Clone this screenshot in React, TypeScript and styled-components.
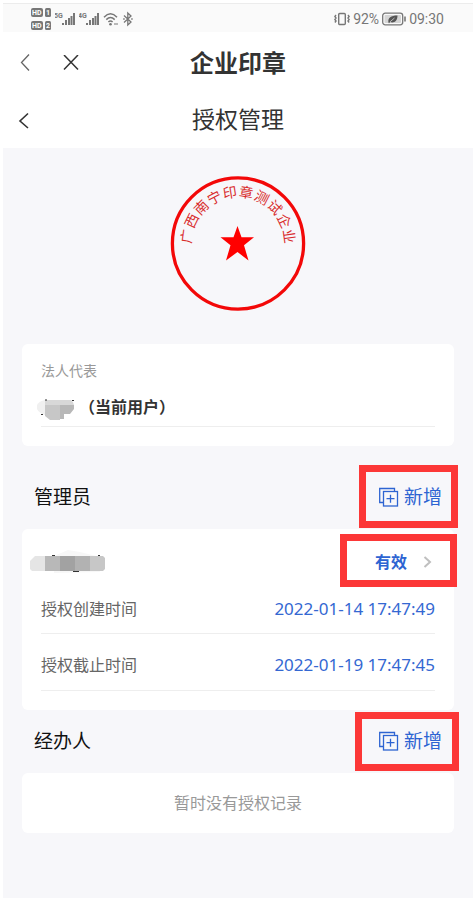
import React from "react";
import styled, { createGlobalStyle } from "styled-components";

const GlobalStyle = createGlobalStyle`
  * { box-sizing: border-box; }
  html, body { margin: 0; padding: 0; background: #ffffff; }
  body { font-family: Inter, "Noto Sans CJK SC", sans-serif; color: #333333; }
  button { font: inherit; color: inherit; background: none; border: 0; padding: 0; cursor: pointer; }
  h1, h2, p, dl, dt, dd { margin: 0; font-weight: 400; }
  svg { display: block; flex: none; }
`;

const Page = styled.div`
  min-height: 100vh;
  padding: 3px 0 0 3px;
  display: flex;
  flex-direction: column;
`;

const StatusBar = styled.div`
  height: 29px;
  padding: 2px 29px 0 28px;
  display: flex;
  align-items: center;
  justify-content: space-between;
  background: #fafafa;
  border-top: 1px solid #ececec;
  font-family: Roboto, sans-serif;
  font-size: 14px;
  line-height: 20px;
  color: #777777;
`;

const StatusGroup = styled.div<{ $gap: number }>`
  display: flex;
  align-items: center;
  gap: ${(p) => p.$gap}px;
`;

const Header = styled.header`
  padding-top: 4px;
`;

const HeaderRow = styled.div`
  height: 56px;
  padding: 0 12px;
  display: grid;
  grid-template-columns: 1fr auto 1fr;
  align-items: center;
`;

const HeaderActions = styled.div`
  display: flex;
  align-items: center;
  gap: 26px;
`;

const IconButton = styled.button`
  width: 20px;
  height: 24px;
  display: flex;
  align-items: center;
  justify-content: center;
`;

const AppTitle = styled.h1`
  font-size: 24px;
  line-height: 32px;
  font-weight: 700;
`;

const PageTitle = styled.h2`
  font-size: 23px;
  line-height: 32px;
`;

const Content = styled.main`
  flex: 1;
  padding: 28px 19px;
  background: #f7f7fa;
`;

const SealFrame = styled.div`
  display: flex;
  justify-content: center;
  margin-bottom: 33px;
`;

const Card = styled.section`
  background: #ffffff;
  border-radius: 6px;
`;

const RepresentativeCard = styled(Card)`
  padding: 16px 19px 19px;
  margin-bottom: 20px;
`;

const Caption = styled.p`
  font-size: 14px;
  line-height: 22px;
  color: #999999;
`;

const PersonRow = styled.div`
  height: 45px;
  padding-top: 6px;
  display: flex;
  align-items: center;
  border-bottom: 1px solid #eeeeee;
  font-size: 16px;
  line-height: 24px;
  font-weight: 700;
`;

const NameSlot = styled.div`
  width: 38px;
  padding-top: 6px;
  display: flex;
  margin-left: -4px;
  margin-right: 4px;
`;

const SectionHeader = styled.div`
  height: 63px;
  padding: 0 12px;
  display: flex;
  align-items: center;
  justify-content: space-between;
`;

const SectionTitle = styled.h2`
  font-size: 19px;
  line-height: 28px;
  color: #111111;
`;

const MarkedButton = styled.button<{ $inset: string }>`
  position: relative;
  display: flex;
  align-items: center;
  color: #2d64d2;

  &::after {
    content: "";
    position: absolute;
    inset: ${(p) => p.$inset};
    border: 7px solid #fc3737;
    pointer-events: none;
  }
`;

const AddButton = styled(MarkedButton)`
  gap: 5px;
  font-size: 19px;
  line-height: 28px;
`;

const StatusButton = styled(MarkedButton)`
  gap: 16px;
  margin-right: 3px;
  font-size: 16px;
  line-height: 24px;
  font-weight: 700;
`;

const AdminCard = styled(Card)`
  padding: 8px 19px 19px;
`;

const AdminRow = styled.div`
  height: 50px;
  display: flex;
  align-items: center;
  justify-content: space-between;
`;

const AdminName = styled.div`
  margin-left: -11px;
`;

const Detail = styled.div`
  height: 57px;
  padding-top: 6px;
  display: flex;
  align-items: center;
  justify-content: space-between;
  border-bottom: 1px solid #eeeeee;
  font-size: 16px;
  line-height: 24px;

  &:first-child {
    height: 47px;
    padding: 0 0 3px;
  }
`;

const DetailLabel = styled.dt`
  color: #666666;
`;

const DetailValue = styled.dd`
  font-family: "Noto Sans", sans-serif;
  font-size: 17px;
  color: #3468d2;
`;

const EmptyCard = styled(Card)`
  padding: 18px 19px;
  text-align: center;
  font-size: 16px;
  line-height: 24px;
  color: #999999;
`;

function HdBadges() {
  return (
    <svg width="20" height="24" viewBox="0 0 20 24" fill="#777">
      {["1", "2"].map((n, i) => (
        <g key={n} transform={`translate(0 ${i * 13})`}>
          <rect x="0" y="1" width="12" height="9" rx="2" />
          <rect x="14" y="1" width="6" height="9" rx="1.500" />
          <text x="1" y="8" fill="#fff" fontSize="7" fontWeight="700" fontFamily="Roboto, sans-serif">HD</text>
          <text x="15" y="8" fill="#fff" fontSize="7" fontWeight="700" fontFamily="Roboto, sans-serif">{n}</text>
        </g>
      ))}
    </svg>
  );
}

function Signal({ label }: { label: string }) {
  return (
    <svg width="20" height="16" viewBox="0 0 20 16" fill="#777">
      <text x="-1" y="7" fontSize="7" fontWeight="700" fontFamily="Roboto, sans-serif">{label}</text>
      <rect x="7" y="12" width="2" height="2" />
      <rect x="10" y="9" width="2" height="5" />
      <rect x="13" y="7" width="2" height="7" />
      <rect x="15.500" y="5" width="2" height="9" />
      <rect x="18" y="2" width="2" height="12" />
    </svg>
  );
}

function Wifi() {
  return (
    <svg width="16" height="16" viewBox="0 0 16 16" fill="none" stroke="#777" strokeWidth="1.500">
      <path d="M1 6.200Q7.500 -.6 14 6.200M3.300 8.600Q7.500 4.500 11.700 8.600M5.400 11Q7.500 9 9.600 11" />
      <circle cx="7.500" cy="13.200" r="1.300" fill="#777" stroke="none" />
      <path d="M12 12v2M14 12v2" strokeWidth="1" />
    </svg>
  );
}

function Bluetooth() {
  return (
    <svg width="10" height="16" viewBox="0 0 10 16" fill="none" stroke="#777" strokeWidth="1.300">
      <path d="M1 4.500 8 11 4.800 14V2L8 5 1 11.500" />
      <path d="M.2 8h1.500M8.200 8h1.500" />
    </svg>
  );
}

function Vibrate() {
  return (
    <svg width="16" height="14" viewBox="0 0 16 14" fill="none" stroke="#777" strokeWidth="1.400">
      <rect x="4.700" y="1.500" width="6.600" height="11" rx="1" />
      <path d="M2 3 .9 4.500 2 6 .9 7.500 2 9 .9 10.500M14 3l1.100 1.500L14 6l1.100 1.500L14 9l1.100 1.500" />
    </svg>
  );
}

function Battery() {
  return (
    <svg width="24" height="14" viewBox="0 0 24 14" fill="none">
      <rect x=".7" y="1.200" width="20" height="11.600" rx="2.500" stroke="#777" strokeWidth="1.300" />
      <rect x="2.500" y="3" width="16.500" height="8" rx="1" fill="#d5d5d5" />
      <path d="M6.500 10.500C5.500 6 9 3.500 15.500 3.500 15.500 9 12 11.500 8 10L7 11.500Z" fill="#555" />
      <path d="M8 9.800 12.500 6" stroke="#d5d5d5" strokeWidth=".8" />
      <path d="M23 4.500v5" stroke="#777" strokeWidth="1.600" />
    </svg>
  );
}

function BackIcon({ strong = false }: { strong?: boolean }) {
  return (
    <svg width="20" height="20" viewBox="0 0 20 20" fill="none" stroke={strong ? "#333" : "#666"} strokeWidth={strong ? 1.6 : 1.3}>
      <path d={strong ? "M13 3.500 5 11 13 18" : "M14 .5 6.500 8.500 14 16.500"} />
    </svg>
  );
}

function CloseIcon() {
  return (
    <svg width="16" height="18" viewBox="0 0 16 18" fill="none" stroke="#333" strokeWidth="1.500">
      <path d="M1 0 15 14.500M15 0 1 14.500" />
    </svg>
  );
}

function AddIcon() {
  return (
    <svg width="20" height="22" viewBox="0 0 20 22" fill="none" stroke="#2d64d2" strokeWidth="1.300">
      <path d="M4.500 15.500H.7V1.500H15.500V4" />
      <rect x="4.500" y="4.500" width="14" height="14.500" />
      <path d="M11.500 7.700v8M7.500 11.700h8" />
    </svg>
  );
}

function ChevronIcon() {
  return (
    <svg width="9" height="12" viewBox="0 0 9 12" fill="none" stroke="#bfbfbf" strokeWidth="2">
      <path d="M1.500 1 7 6 1.500 11" />
    </svg>
  );
}

function MaskedRepresentative() {
  return (
    <svg width="38" height="22" viewBox="0 0 38 22">
      <path d="M0 6Q2 2 8 1V16Q2 14 0 10Z" fill="#f0f0f0" />
      <path d="M8 1H34Q37 3 37 6H8Z" fill="#d8d8d8" />
      <path d="M8 6H23V21H13L8 17Z" fill="#c7c7c7" />
      <path d="M23 6H37V10L33 15H27V20H23Z" fill="#b8b8b8" />
      <path d="M4 15.500h2M8 1h2M35 1.500h2" stroke="#333" strokeWidth="1" />
    </svg>
  );
}

function MaskedAdministrator() {
  return (
    <svg width="76" height="24" viewBox="0 0 76 24">
      <path d="M24 6 38 0 50 2 66 6 70 22 24 23Z" fill="#f7f7f7" />
      <path d="M0 11 5 6H15V21H2L0 19Z" fill="#e5e5e5" />
      <rect x="15" y="6" width="15" height="15" fill="#b8b8b8" />
      <rect x="30" y="6" width="15" height="15" fill="#a2a2a2" />
      <rect x="45" y="6" width="15" height="15" fill="#b2b2b2" />
      <path d="M60 6H73L75 8V19L73 21H60Z" fill="#c7c7c7" />
      <path d="M43 21.500h6M22 5.500h3M68 5.500h2" stroke="#333" strokeWidth="1" />
    </svg>
  );
}

const SEAL_NAME = "广西南宁印章测试企业";

function Seal() {
  const chars = Array.from(SEAL_NAME);
  const step = 164 / (chars.length - 1);
  return (
    <svg width="136" height="135" viewBox="0 0 136 135" role="img" aria-label={SEAL_NAME}>
      <circle cx="68" cy="67.500" r="65.600" fill="none" stroke="#f30808" strokeWidth="3.300" />
      {chars.map((c, i) => (
        <text
          key={i}
          x="68"
          y="21"
          textAnchor="middle"
          fontSize="14"
          fontFamily="'Noto Sans CJK SC', sans-serif"
          fill="#d92c2c"
          transform={`rotate(${-82 + i * step} 68 67.500)`}
        >
          {c}
        </text>
      ))}
      <path d="M67.500 50 71.500 61.300H84L74 69.300 78.500 84.500 67.500 76 56 84.500 60.500 69.300 50.500 61.300H63.500Z" fill="#ff0000" />
    </svg>
  );
}

function SectionHeading({ title, inset }: { title: string; inset: string }) {
  return (
    <SectionHeader>
      <SectionTitle>{title}</SectionTitle>
      <AddButton type="button" $inset={inset}>
        <AddIcon />
        新增
      </AddButton>
    </SectionHeader>
  );
}

const details = [
  { label: "授权创建时间", value: "2022-01-14 17:47:49" },
  { label: "授权截止时间", value: "2022-01-19 17:47:45" },
];

export default function App() {
  return (
    <>
      <GlobalStyle />
      <Page>
        <StatusBar>
          <StatusGroup $gap={4}>
            <HdBadges />
            <Signal label="5G" />
            <Signal label="4G" />
            <Wifi />
            <Bluetooth />
          </StatusGroup>
          <StatusGroup $gap={3}>
            <Vibrate />
            <span>92%</span>
            <Battery />
            <time>09:30</time>
          </StatusGroup>
        </StatusBar>
        <Header>
          <HeaderRow>
            <HeaderActions>
              <IconButton type="button" aria-label="返回"><BackIcon /></IconButton>
              <IconButton type="button" aria-label="关闭"><CloseIcon /></IconButton>
            </HeaderActions>
            <AppTitle>企业印章</AppTitle>
          </HeaderRow>
          <HeaderRow>
            <HeaderActions>
              <IconButton type="button" aria-label="返回上一页"><BackIcon strong /></IconButton>
            </HeaderActions>
            <PageTitle>授权管理</PageTitle>
          </HeaderRow>
        </Header>
        <Content>
          <SealFrame><Seal /></SealFrame>
          <RepresentativeCard>
            <Caption>法人代表</Caption>
            <PersonRow>
              <NameSlot><MaskedRepresentative /></NameSlot>
              （当前用户）
            </PersonRow>
          </RepresentativeCard>
          <SectionHeading title="管理员" inset="-19px -16px -16px -20px" />
          <AdminCard>
            <AdminRow>
              <AdminName><MaskedAdministrator /></AdminName>
              <StatusButton type="button" $inset="-16px -25px -13px -35px">
                有效
                <ChevronIcon />
              </StatusButton>
            </AdminRow>
            <dl>
              {details.map((d) => (
                <Detail key={d.label}>
                  <DetailLabel>{d.label}</DetailLabel>
                  <DetailValue>{d.value}</DetailValue>
                </Detail>
              ))}
            </dl>
          </AdminCard>
          <SectionHeading title="经办人" inset="-16px -17px -15px -24px" />
          <EmptyCard>暂时没有授权记录</EmptyCard>
        </Content>
      </Page>
    </>
  );
}
